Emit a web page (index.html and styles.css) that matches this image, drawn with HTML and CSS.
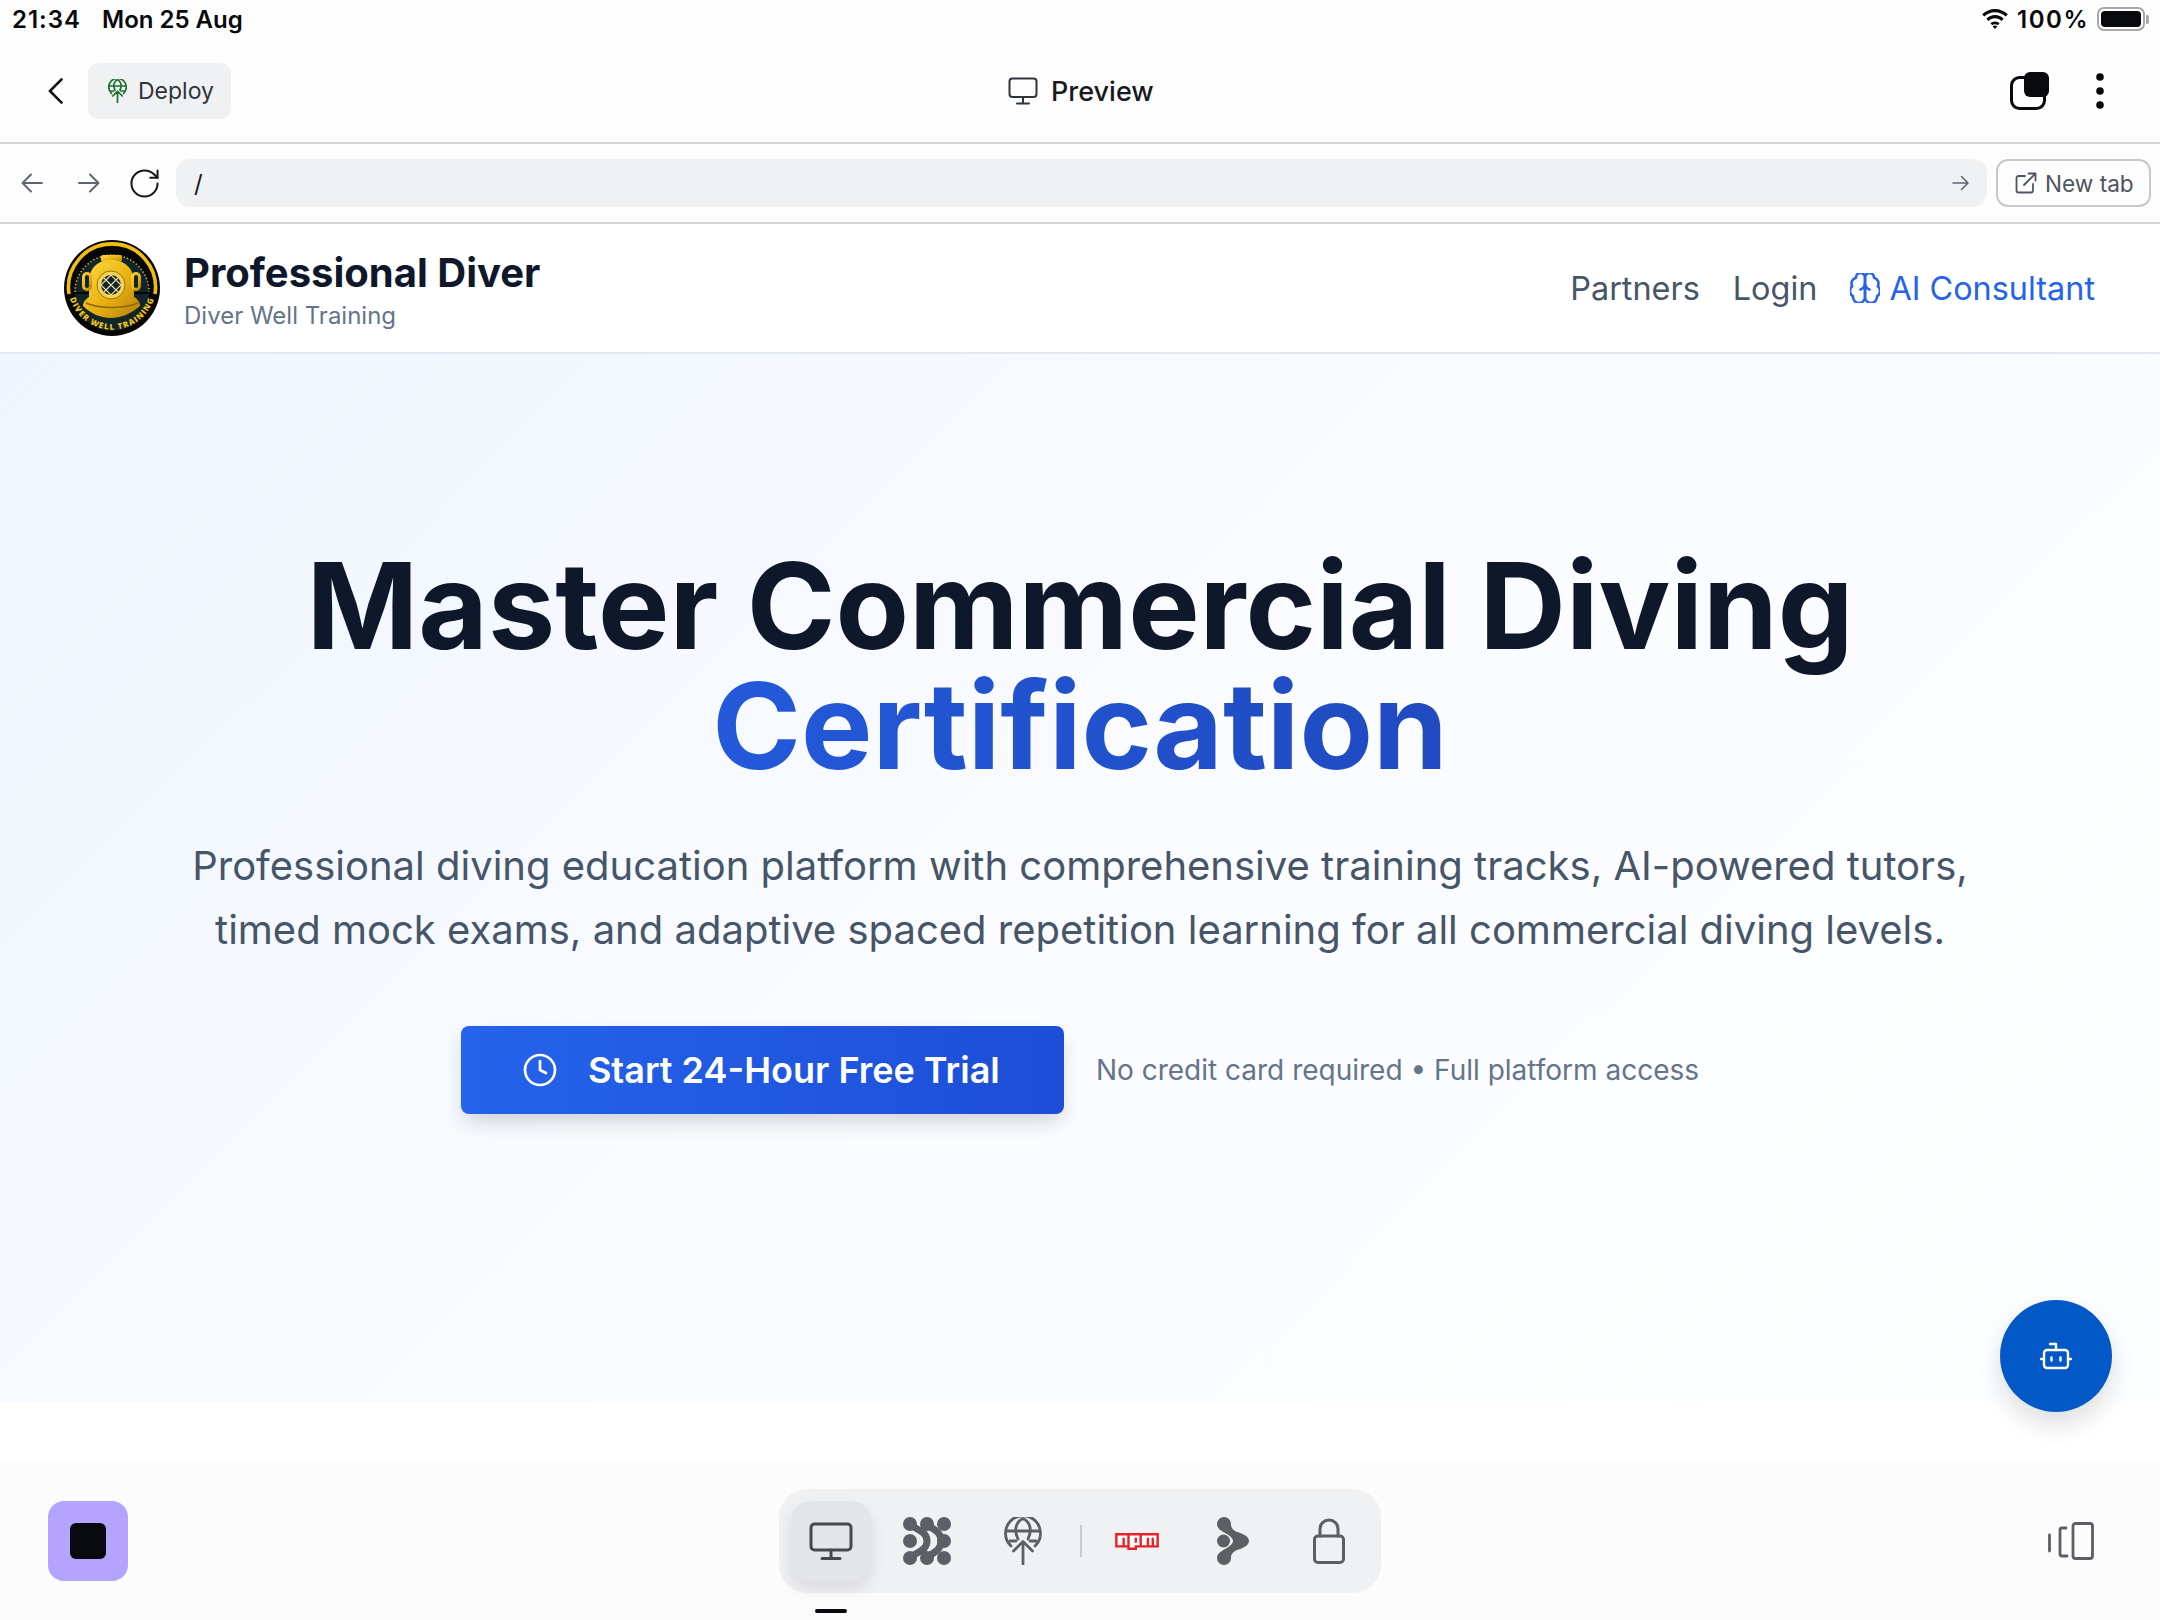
FILE: index.html
```html
<!DOCTYPE html>
<html lang="en">
<head>
<meta charset="utf-8">
<title>Professional Diver</title>
<link rel="stylesheet" href="styles.css">
</head>
<body>
<div class="screen">
  <div class="status">
    <div class="status-left"><span class="time">21:34</span><span>Mon 25 Aug</span></div>
    <div class="status-right">
      <svg class="wifi" viewBox="0 0 28 20"><path d="M14 3.2c4.2 0 7.9 1.6 10.8 4.3l2-2.2C23.3 2 18.900 0 14 0S4.700 2 1.200 5.300l2 2.200C6.100 4.800 9.800 3.200 14 3.200zM14 9.300c2.500 0 4.800 1 6.500 2.600l2.100-2.200C20.300 7.500 17.300 6.100 14 6.100s-6.300 1.400-8.600 3.600l2.100 2.200c1.700-1.600 4-2.600 6.500-2.600zM14 15.200c1 0 2 .4 2.700 1.100l1.900-2.100c-1.200-1.100-2.900-1.800-4.600-1.800s-3.400.7-4.600 1.800l1.900 2.100c.7-.7 1.700-1.100 2.700-1.100zM14 20l2.300-2.500c-1.300-1.200-3.300-1.200-4.600 0z"/></svg>
      <span class="pct">100%</span>
      <div class="battery"><div class="battery-body"><div class="battery-fill"></div></div><div class="battery-nub"></div></div>
    </div>
  </div>

  <div class="topbar">
    <div class="topbar-left">
      <svg class="chevron" viewBox="0 0 16 28"><path d="M14.500 1.500 2 14l12.500 12.500" fill="none" stroke="#111" stroke-width="2.800" stroke-linecap="round" stroke-linejoin="round"/></svg>
      <div class="deploy">
        <svg class="deploy-icon" viewBox="0 0 38 48" fill="none" stroke="#1a6e2e" stroke-width="3.400" stroke-linecap="round" stroke-linejoin="round"><path d="M7 29A17.500 17.500 0 1 1 31 29"/><path d="M14 22C9 12 13 4 19 1.500 25 4 29 12 24 22"/><path d="M2.500 14h33M6 24h6M26 24h6M19 25v22M9.500 34l9.500-9.500 9.500 9.500"/></svg>
        <span>Deploy</span>
      </div>
    </div>
    <div class="topbar-title">
      <svg class="title-icon" viewBox="0 0 30 28" fill="none" stroke="#30343b" stroke-width="2" stroke-linecap="round" stroke-linejoin="round"><rect x="1.500" y="1.500" width="27" height="18.500" rx="3"/><path d="M15 20v6M9 26.500h12"/></svg>
      <span>Preview</span>
    </div>
    <div class="topbar-right">
      <svg class="tabs-icon" viewBox="0 0 39 38"><rect x="1.500" y="5.500" width="33" height="31" rx="8" fill="none" stroke="#08090c" stroke-width="3"/><rect x="14" y="0" width="25" height="25" rx="6" fill="#08090c"/></svg>
      <svg class="dots-icon" viewBox="0 0 8 36"><circle cx="4" cy="4" r="3.800"/><circle cx="4" cy="18" r="3.800"/><circle cx="4" cy="32" r="3.800"/></svg>
    </div>
  </div>

  <div class="browserbar">
    <svg class="nav-arrow" viewBox="0 0 22 20" fill="none" stroke="#5f6570" stroke-width="2" stroke-linecap="round" stroke-linejoin="round"><path d="M21 10H1.500M10 1.500 1.500 10l8.500 8.500"/></svg>
    <svg class="nav-arrow" viewBox="0 0 22 20" fill="none" stroke="#5f6570" stroke-width="2" stroke-linecap="round" stroke-linejoin="round"><path d="M1 10h19.500M12 1.500l8.500 8.500-8.500 8.500"/></svg>
    <svg class="reload" viewBox="2 2 20 20" fill="none" stroke="#16181c" stroke-width="1.400" stroke-linecap="round" stroke-linejoin="round"><path d="M21 12a9 9 0 1 1-9-9c2.520 0 4.930 1 6.740 2.740L21 8"/><path d="M21 3v5h-5"/></svg>
    <div class="urlbar">
      <span class="url">/</span>
      <svg class="url-go" viewBox="0 0 18 16" fill="none" stroke="#5f6570" stroke-width="1.600" stroke-linecap="round" stroke-linejoin="round"><path d="M1 8h15M9.500 1.500 16 8l-6.500 6.500"/></svg>
    </div>
    <div class="newtab">
      <svg class="newtab-icon" viewBox="0 0 22 22" fill="none" stroke="#4e5460" stroke-width="1.800" stroke-linecap="round" stroke-linejoin="round"><path d="M10 4H3.500A2 2 0 0 0 1.500 6v12.500a2 2 0 0 0 2 2H16a2 2 0 0 0 2-2V12M9 13 20.500 1.500M13.500 1.500h7v7"/></svg>
      <span>New tab</span>
    </div>
  </div>

  <div class="app">
    <header class="site-header">
      <div class="brand">
        <svg class="logo" viewBox="0 0 96 96">
          <defs>
            <linearGradient id="gold" x1="0" y1="0" x2="1" y2="1"><stop offset="0" stop-color="#ffdc3e"/><stop offset=".55" stop-color="#e8b012"/><stop offset="1" stop-color="#b07e0a"/></linearGradient>
            <path id="ringtext" d="M4.800 54A44 44 0 0 0 91.200 54"/>
          </defs>
          <circle cx="48" cy="48" r="48" fill="#050505"/>
          <path d="M5 54A43.500 43.500 0 1 1 91 54" fill="none" stroke="#f3bd0b" stroke-width="3.600"/>
          <path d="M10.500 52A37.500 37.500 0 1 1 85.500 52" fill="#12262a"/>
          <path d="M11 54A36.500 36.500 0 0 0 85 54z" fill="#12262a"/>
          <path d="M11 52A37 37 0 1 1 85 52" fill="none" stroke="#e7c23c" stroke-width="1.500" stroke-dasharray="1.200 2.300"/>
          <rect x="37" y="15" width="21" height="7" rx="2" fill="url(#gold)"/>
          <path d="M25 42c0-15 10-22 22-22s23 7 23 22v15c4 2 6 6 6 9-8 7-18 12-29 12s-21-5-28-12c0-4 3-7 6-9z" fill="url(#gold)"/>
          <rect x="18" y="32" width="10" height="19" rx="5" fill="url(#gold)"/>
          <rect x="67" y="32" width="10" height="19" rx="5" fill="url(#gold)"/>
          <rect x="21" y="35" width="4" height="13" rx="2" fill="#12262a"/>
          <rect x="70" y="35" width="4" height="13" rx="2" fill="#12262a"/>
          <circle cx="47" cy="45" r="14" fill="#f6d251" stroke="#9a7208"/>
          <circle cx="47" cy="45" r="10" fill="#12262a"/>
          <path d="m40 38 14 14M54 38 40 52M47 35l-10 10 10 10 10-10z" fill="none" stroke="#e5d9a8" stroke-width="1.200"/>
          <path d="M22 63c14 6 37 6 52 0" fill="none" stroke="#8d6707" stroke-width="1.400"/>
          <text class="logo-text"><textPath href="#ringtext" startOffset="50%" text-anchor="middle">DIVER WELL TRAINING</textPath></text>
        </svg>
        <div class="brand-text">
          <div class="brand-title">Professional Diver</div>
          <div class="brand-sub">Diver Well Training</div>
        </div>
      </div>
      <nav class="site-nav">
        <a>Partners</a>
        <a>Login</a>
        <a class="nav-ai">
          <svg class="brain" viewBox="2 2 20 20" fill="none" stroke="#2563eb" stroke-width="1.700" stroke-linecap="round" stroke-linejoin="round"><path d="M12 5a3 3 0 1 0-5.997.125 4 4 0 0 0-2.526 5.770 4 4 0 0 0 .556 6.588A4 4 0 1 0 12 18Z"/><path d="M12 5a3 3 0 1 1 5.997.125 4 4 0 0 1 2.526 5.770 4 4 0 0 1-.556 6.588A4 4 0 1 1 12 18Z"/><path d="M15 13a4.500 4.500 0 0 1-3-4 4.500 4.500 0 0 1-3 4"/></svg>
          <span>AI Consultant</span>
        </a>
      </nav>
    </header>

    <section class="hero">
      <h1>Master Commercial Diving <span class="accent">Certification</span></h1>
      <p class="lead">Professional diving education platform with comprehensive training tracks, AI-powered tutors, timed mock exams, and adaptive spaced repetition learning for all commercial diving levels.</p>
      <div class="cta-row">
        <a class="cta">
          <svg class="clock" viewBox="0 0 24 24" fill="none" stroke="#fff" stroke-width="1.800" stroke-linecap="round" stroke-linejoin="round"><circle cx="12" cy="12" r="10"/><path d="M12 6v6l4 2"/></svg>
          <span>Start 24-Hour Free Trial</span>
        </a>
        <span class="cta-note">No credit card required • Full platform access</span>
      </div>
    </section>
    <div class="hero-gap"></div>
    <button class="fab" aria-label="Assistant">
      <svg class="robot" viewBox="0 0 24 24" fill="none" stroke="#fff" stroke-width="1.600" stroke-linecap="round" stroke-linejoin="round"><path d="M12 8V4H8"/><rect x="4" y="8" width="16" height="12" rx="2"/><path d="M2 14h2M20 14h2M15 13v2M9 13v2"/></svg>
    </button>
  </div>

  <footer class="dock-bar">
    <div class="stop"><div class="stop-square"></div></div>
    <div class="dock">
      <div class="dock-item active">
        <svg class="dock-monitor" viewBox="0 0 44 38" fill="none" stroke="#47494f" stroke-width="3" stroke-linecap="round" stroke-linejoin="round"><rect x="2" y="2" width="40" height="26" rx="3.500"/><path d="M22 28v8M13 36.500h18"/></svg>
        <div class="home-mark"></div>
      </div>
      <div class="dock-item">
        <svg class="dock-blobs" viewBox="0 0 48 48"><g fill="#5c5f66"><circle cx="7" cy="7" r="7"/><circle cx="24" cy="7" r="7"/><circle cx="41" cy="7" r="7"/><circle cx="7" cy="24" r="7"/><circle cx="41" cy="24" r="7"/><circle cx="7" cy="41" r="7"/><circle cx="24" cy="41" r="7"/><circle cx="41" cy="41" r="7"/></g><g fill="none" stroke="#5c5f66" stroke-width="7" stroke-linecap="round"><path d="M7 7c6 6 17 7 17 17S13 35 7 41"/><path d="M24 7c6 6 14 7 14 17S30 35 24 41"/></g></svg>
      </div>
      <div class="dock-item">
        <svg class="dock-globe" viewBox="0 0 38 48" fill="none" stroke="#5c5f66" stroke-width="2.800" stroke-linecap="round" stroke-linejoin="round"><path d="M7 29A17.500 17.500 0 1 1 31 29"/><path d="M14 22C9 12 13 4 19 1.500 25 4 29 12 24 22"/><path d="M2.500 14h33M6 24h6M26 24h6M19 25v22M9.500 34l9.500-9.500 9.500 9.500"/></svg>
      </div>
      <div class="dock-divider"></div>
      <div class="dock-item">
        <svg class="dock-npm" viewBox="0 0 18 7"><path fill="#e8212b" d="M0 0h18v6H9v1H5V6H0z"/><path fill="#fff" d="M1 5h2V2h1v3h1V1H1zM6 1v5h2V5h2V1zm2 1h1v2H8zM11 1v4h2V2h1v3h1V2h1v3h1V1z"/></svg>
      </div>
      <div class="dock-item">
        <svg class="dock-connect" viewBox="0 0 32 48" fill="#5c5f66"><circle cx="6.500" cy="24" r="6.500"/><path d="M7 0a7 7 0 0 1 7 7c0 4 2 6 6 8 5 1.500 12 4 12 9s-7 7.500-12 9c-4 2-6 4-6 8a7 7 0 0 1-14 0c0-5 5-7 8-9 5-3 8-5 8-8s-3-5-8-8C5 14 0 12 0 7a7 7 0 0 1 7-7z"/></svg>
      </div>
      <div class="dock-item">
        <svg class="dock-lock" viewBox="0 0 32 46" fill="none" stroke="#5c5f66" stroke-width="3" stroke-linecap="round" stroke-linejoin="round"><rect x="1.500" y="18" width="29" height="26.500" rx="3.500"/><path d="M7 18v-7a9 9 0 0 1 18 0v7"/></svg>
      </div>
    </div>
    <svg class="split-icon" viewBox="0 0 46 38" fill="none" stroke="#5c5f66" stroke-width="2.800" stroke-linecap="round" stroke-linejoin="round"><path d="M1.500 13v16M18 6h-4a2 2 0 0 0-2 2v24a2 2 0 0 0 2 2h5"/><rect x="25" y="1.500" width="19.500" height="35" rx="2.500"/></svg>
  </footer>
</div>
</body>
</html>
```
FILE: styles.css
```css
* { box-sizing: border-box; margin: 0; padding: 0; }
html, body { width: 2160px; height: 1620px; overflow: hidden; background: #fff; }
body { font-family: Inter, "Liberation Sans", sans-serif; color: #0f172a; }
svg { display: block; flex: none; }

.screen { width: 2160px; height: 1620px; display: flex; flex-direction: column; position: relative; background: #fff; }

/* status bar */
.status { height: 38px; padding: 0 11px 0 12px; background: #fdfdfd; display: flex; justify-content: space-between; align-items: center; font-size: 24px; font-weight: 600; color: #08090c; }
.status-left { display: flex; gap: 21px; }
.time { letter-spacing: 1px; }
.status-right { display: flex; align-items: center; gap: 8px; }
.pct { letter-spacing: 1.500px; }
.wifi { width: 28px; height: 20px; fill: #08090c; }
.battery { display: flex; align-items: center; gap: 1px; }
.battery-body { width: 48px; height: 24px; border: 2px solid #a8a8a8; border-radius: 7px; padding: 2px; }
.battery-fill { width: 100%; height: 100%; background: #08090c; border-radius: 4px; }
.battery-nub { width: 3px; height: 9px; background: #a8a8a8; border-radius: 0 2px 2px 0; }

/* top bar */
.topbar { height: 106px; padding: 25px 0 23px 48px; background: #fdfdfd; border-bottom: 2px solid #d6d6d6; display: flex; align-items: center; justify-content: space-between; position: relative; }
.topbar-left { display: flex; align-items: center; gap: 25px; }
.chevron { width: 15px; height: 26px; }
.deploy { width: 143px; height: 56px; background: #f0f1f3; border-radius: 10px; display: flex; align-items: center; gap: 11px; padding-left: 20px; font-size: 23px; color: #30343b; }
.deploy-icon { width: 19px; height: 24px; }
.topbar-title { position: absolute; left: 1008px; top: 25px; height: 56px; display: flex; align-items: center; gap: 13px; font-size: 27px; font-weight: 500; color: #17191d; }
.title-icon { width: 30px; height: 28px; }
.topbar-right { display: flex; align-items: center; gap: 47px; padding-right: 56px; }
.tabs-icon { width: 39px; height: 38px; }
.dots-icon { width: 8px; height: 36px; fill: #08090c; }

/* browser bar */
.browserbar { height: 80px; padding: 14px 9px 14px 21px; background: #fdfdfd; border-bottom: 2px solid #d6d6d6; display: flex; align-items: center; }
.nav-arrow { width: 22px; height: 20px; margin-right: 35px; }
.nav-arrow + .reload { margin-left: -5px; }
.reload { width: 29px; height: 29px; margin-right: 17px; }
.urlbar { flex: 1; height: 48px; background: #f0f1f3; border-radius: 14px; display: flex; align-items: center; justify-content: space-between; padding: 0 17px 0 18px; }
.url { font-size: 24px; color: #17191d; }
.url-go { width: 18px; height: 16px; }
.newtab { width: 155px; height: 48px; margin-left: 9px; border: 2px solid #c6c8ca; border-radius: 12px; display: flex; align-items: center; gap: 8px; padding-left: 17px; font-size: 22.600px; color: #4e5460; }
.newtab-icon { width: 22px; height: 22px; }

/* app */
.app { position: relative; flex: none; height: 1236px; display: flex; flex-direction: column; background: #fff; }
.site-header { height: 130px; padding: 0 64px; border-bottom: 2px solid #e2e8f0; background: #fff; display: flex; align-items: center; justify-content: space-between; }
.brand { display: flex; align-items: center; gap: 24px; }
.logo { width: 96px; height: 96px; }
.logo-text { font-size: 8px; font-weight: 800; fill: #f4c515; letter-spacing: 1.100px; font-family: "Open Sans", sans-serif; }
.brand-text { padding-top: 5px; }
.brand-title { font-size: 40px; font-weight: 700; line-height: 48px; color: #0f172a; }
.brand-sub { font-size: 24px; line-height: 32px; color: #64748b; margin-top: 3px; }
.site-nav { display: flex; align-items: center; gap: 33px; font-size: 32.400px; color: #475569; margin-right: 1px; }
.nav-ai { display: flex; align-items: center; gap: 9px; color: #2563eb; }
.brain { width: 30px; height: 30px; }

.hero { height: 1048px; padding-top: 192px; background: linear-gradient(135deg, #eff6ff 0%, #fbfcff 55%, #fdfeff 100%); display: flex; flex-direction: column; align-items: center; }
h1 { width: 1700px; text-align: center; font-size: 120px; line-height: 120px; font-weight: 700; color: #0f172a; }
.accent { display: block; background: linear-gradient(90deg, #2563eb, #1e40af); -webkit-background-clip: text; background-clip: text; color: transparent; }
.lead { width: 1800px; margin-top: 48px; text-align: center; font-size: 40px; line-height: 64px; color: #475569; }
.cta-row { display: flex; align-items: center; gap: 32px; margin-top: 64px; }
.cta { width: 603px; height: 88px; border-radius: 8px; background: linear-gradient(90deg, #2563eb, #1d4ed8); box-shadow: 0 10px 20px -3px rgba(15, 23, 42, .18); color: #fff; display: flex; align-items: center; padding-left: 61px; gap: 30px; font-size: 36px; font-weight: 600; }
.clock { width: 36px; height: 36px; }
.cta-note { font-size: 28px; color: #64748b; }
.hero-gap { flex: 1; background: #fff; }

.fab { position: absolute; left: 2000px; top: 1076px; width: 112px; height: 112px; border: 0; border-radius: 50%; background: #0358c8; box-shadow: 0 12px 24px rgba(15, 23, 42, .14); display: flex; align-items: center; justify-content: center; }
.robot { width: 36px; height: 36px; }

/* dock */
.dock-bar { flex: 1; background: #fcfcfc; padding: 29px 66px 0 48px; display: flex; align-items: flex-start; position: relative; }
.stop { width: 80px; height: 80px; margin-top: 12px; border-radius: 16px; background: #b4a4ff; display: flex; align-items: center; justify-content: center; }
.stop-square { width: 36px; height: 36px; border-radius: 6px; background: #08090c; }
.dock { position: absolute; left: 779px; top: 29px; width: 602px; height: 104px; border-radius: 28px; background: #f0f1f3; display: flex; align-items: center; padding: 0 0 0 12px; }
.dock-item { flex: none; width: 80px; height: 80px; display: flex; align-items: center; justify-content: center; position: relative; margin-right: 16px; }
.dock-item:last-child { margin-right: 0; }
.active { background: #e4e5e7; border-radius: 20px; box-shadow: 0 8px 16px rgba(15, 23, 42, .10); }
.home-mark { position: absolute; left: 24px; top: 108px; width: 32px; height: 4px; border-radius: 2px; background: #08090c; }
.dock-monitor { width: 44px; height: 38px; }
.dock-blobs { width: 48px; height: 48px; }
.dock-globe { width: 38px; height: 48px; }
.dock-divider { flex: none; width: 2px; height: 32px; background: #c8c9cb; margin: 0 15px 0 1px; }
.dock-npm { width: 44px; height: 17px; }
.dock-connect { width: 32px; height: 48px; }
.dock-lock { width: 32px; height: 46px; }
.split-icon { width: 46px; height: 38px; margin: 33px 0 0 auto; }
```
